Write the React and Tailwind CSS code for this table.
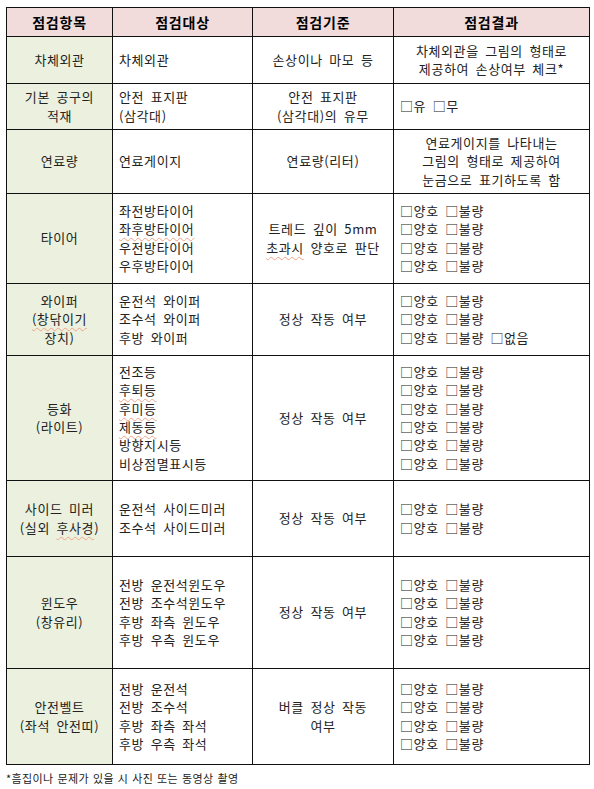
import React from "react";

const FONT = { fontFamily: '"Noto Sans CJK KR", "Noto Sans", sans-serif' };

function W({ children }) {
  return (
    <span className="underline decoration-wavy decoration-[#f0a488] decoration-1 underline-offset-[3px]">
      {children}
    </span>
  );
}

const rows = [
  {
    h: "h-[47px]",
    c1: ["차체외관"],
    c2: ["차체외관"],
    c3: ["손상이나 마모 등"],
    c4: { center: true, lines: ["차체외관을 그림의 형태로", "제공하여 손상여부 체크*"] },
  },
  {
    h: "h-[46px]",
    c1: ["기본 공구의", "적재"],
    c2: ["안전 표지판", "(삼각대)"],
    c3: ["안전 표지판", "(삼각대)의 유무"],
    c4: { lines: ["□유 □무"] },
  },
  {
    h: "h-[64px]",
    c1: ["연료량"],
    c2: ["연료게이지"],
    c3: ["연료량(리터)"],
    c4: { center: true, lines: ["연료게이지를 나타내는", "그림의 형태로 제공하여", "눈금으로 표기하도록 함"] },
  },
  {
    h: "h-[90px]",
    c1: ["타이어"],
    c2: ["좌전방타이어", <W key="a">좌후방타이어</W>, "우전방타이어", "우후방타이어"],
    c3: ["트레드 깊이 5mm", <span key="b"><W>초과시</W> 양호로 판단</span>],
    c4: { lines: ["□양호 □불량", "□양호 □불량", "□양호 □불량", "□양호 □불량"] },
  },
  {
    h: "h-[72px]",
    c1: ["와이퍼", <W key="c">(창닦이기</W>, "장치)"],
    c2: ["운전석 와이퍼", "조수석 와이퍼", "후방 와이퍼"],
    c3: ["정상 작동 여부"],
    c4: { lines: ["□양호 □불량", "□양호 □불량", "□양호 □불량 □없음"] },
  },
  {
    h: "h-[125px]",
    c1: ["등화", "(라이트)"],
    c2: ["전조등", <W key="d">후퇴등</W>, <W key="e">후미등</W>, <W key="f">제동등</W>, "방향지시등", "비상점멸표시등"],
    c3: ["정상 작동 여부"],
    c4: { lines: ["□양호 □불량", "□양호 □불량", "□양호 □불량", "□양호 □불량", "□양호 □불량", "□양호 □불량"] },
  },
  {
    h: "h-[76px]",
    c1: ["사이드 미러", <span key="g">(실외 <W>후사경</W>)</span>],
    c2: ["운전석 사이드미러", "조수석 사이드미러"],
    c3: ["정상 작동 여부"],
    c4: { lines: ["□양호 □불량", "□양호 □불량"] },
  },
  {
    h: "h-[112px]",
    c1: ["윈도우", "(창유리)"],
    c2: ["전방 운전석윈도우", "전방 조수석윈도우", "후방 좌측 윈도우", "후방 우측 윈도우"],
    c3: ["정상 작동 여부"],
    c4: { lines: ["□양호 □불량", "□양호 □불량", "□양호 □불량", "□양호 □불량"] },
  },
  {
    h: "h-[96px]",
    c1: ["안전벨트", "(좌석 안전띠)"],
    c2: ["전방 운전석", "전방 조수석", "후방 좌측 좌석", "후방 우측 좌석"],
    c3: ["버클 정상 작동", "여부"],
    c4: { lines: ["□양호 □불량", "□양호 □불량", "□양호 □불량", "□양호 □불량"] },
  },
];

function Lines({ lines }) {
  return lines.map((l, i) => (
    <div key={i} className="leading-[18.3px] whitespace-pre">
      {l}
    </div>
  ));
}

export default function App() {
  const cell = "border-r border-b border-[#111] flex flex-col justify-center";
  const body = "text-[13px] tracking-[0.6px] [word-spacing:3px] text-[#222]";
  return (
    <div className="w-[594px] h-[789px] bg-white pl-[6px] pt-[7px]" style={FONT}>
      <div className="grid grid-cols-[106px_140px_141px_196px] w-[584px] border-l border-t border-[#111]">
        {["점검항목", "점검대상", "점검기준", "점검결과"].map((t) => (
          <div
            key={t}
            className={`${cell} h-[29px] items-center bg-[#f2dcdb] text-[14px] font-bold tracking-[0.8px] text-black`}
          >
            {t}
          </div>
        ))}
        {rows.map((r, i) => (
          <React.Fragment key={i}>
            <div className={`${cell} ${r.h} ${body} items-center text-center bg-[#ebf1de]`}>
              <Lines lines={r.c1} />
            </div>
            <div className={`${cell} ${r.h} ${body} items-start pl-[6px]`}>
              <Lines lines={r.c2} />
            </div>
            <div className={`${cell} ${r.h} ${body} items-center text-center`}>
              <Lines lines={r.c3} />
            </div>
            <div
              className={`${cell} ${r.h} ${body} ${
                r.c4.center ? "items-center text-center" : "items-start pl-[6px]"
              }`}
            >
              <Lines lines={r.c4.lines} />
            </div>
          </React.Fragment>
        ))}
      </div>
      <div className="mt-[6px] text-[11px] leading-[14px] text-[#222] tracking-[0.4px] [word-spacing:1px]">
        *흠집이나 문제가 있을 시 사진 또는 동영상 촬영
      </div>
    </div>
  );
}
